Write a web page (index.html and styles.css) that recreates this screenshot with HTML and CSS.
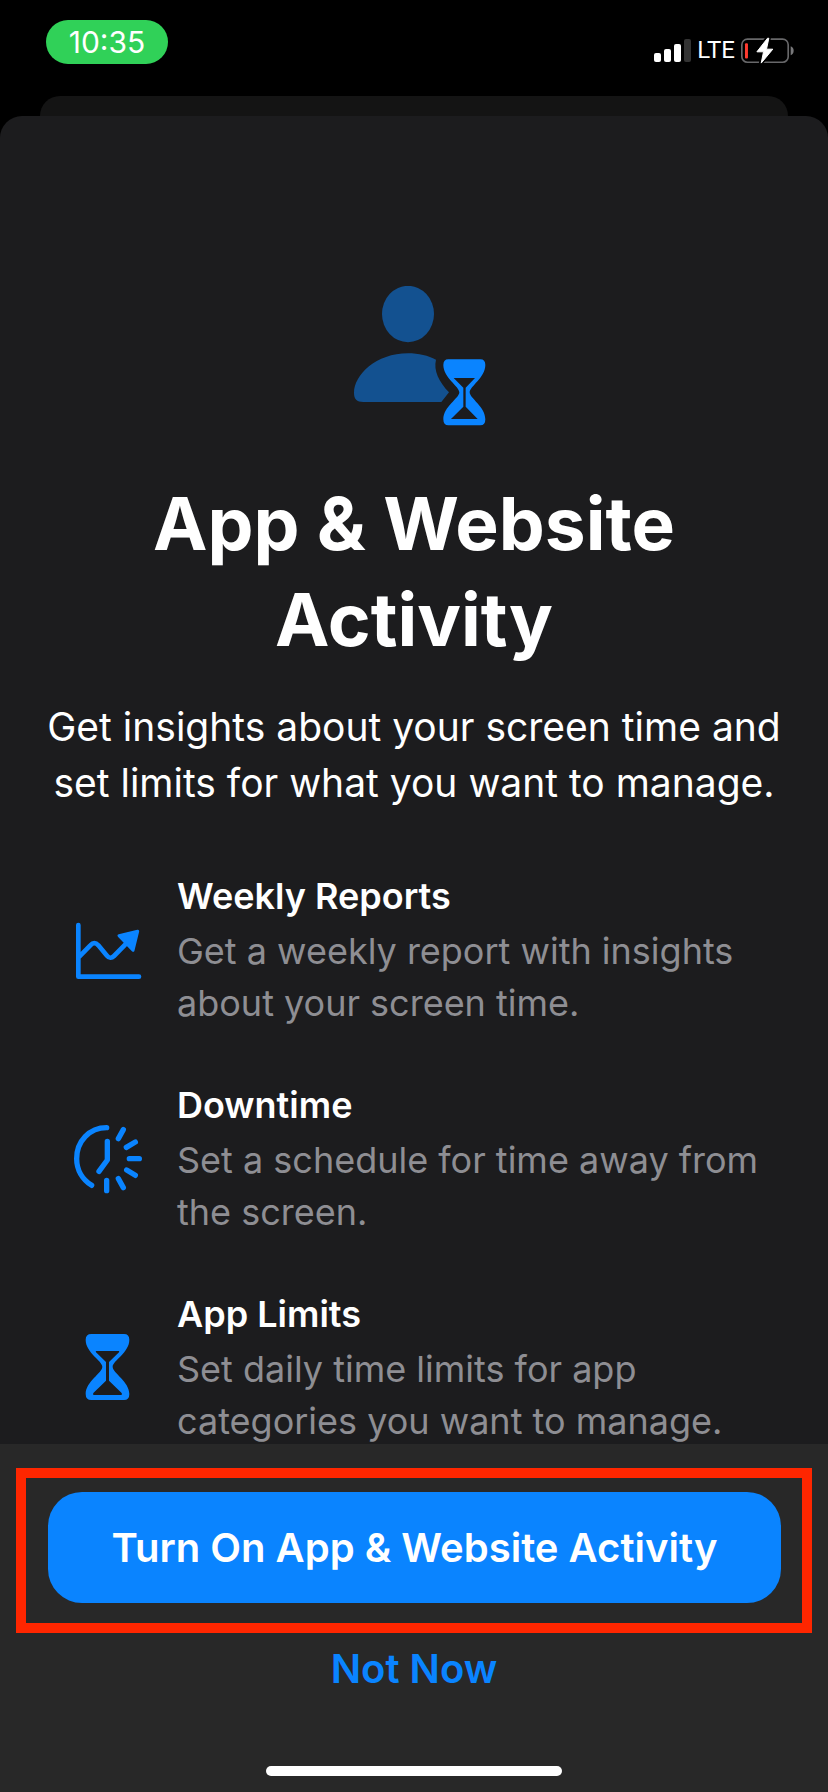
FILE: index.html
```html
<!DOCTYPE html>
<html lang="en">
<head>
<meta charset="utf-8">
<meta name="viewport" content="width=device-width, initial-scale=1">
<title>App &amp; Website Activity</title>
<link rel="stylesheet" href="styles.css">
</head>
<body>
<header class="status-bar">
  <time class="clock">10:35</time>
  <div class="indicators">
    <svg class="signal" viewBox="0 0 111 69" aria-hidden="true">
      <g fill="#fff"><rect y="42" width="21" height="27" rx="6"/><rect x="30" y="30" width="21" height="39" rx="6"/><rect x="60" y="15" width="21" height="54" rx="6"/></g>
      <rect x="90" width="21" height="69" rx="6" fill="#333"/>
    </svg>
    <span class="network">LTE</span>
    <svg class="battery" viewBox="423 108 160 80" aria-hidden="true">
      <rect x="425.500" y="113.500" width="140" height="70" rx="17" fill="none" stroke="#68686a" stroke-width="5"/>
      <path d="M573 135c12 4 12 23 0 27z" fill="#78787a"/>
      <rect x="435" y="126" width="9" height="46" rx="3" fill="#ff3b30"/>
      <path d="M503 110 471 152h18l-6 34 36-42h-17l5-34z" fill="#fff" stroke="#000" stroke-width="12" stroke-linejoin="round"/>
      <path d="M503 111 471 152h20l-7 34 35-42h-19l7-33z" fill="#fff" stroke="#fff" stroke-width="3" stroke-linejoin="round"/>
    </svg>
  </div>
</header>
<div class="back-sheet"></div>
<main class="sheet">
  <svg class="hero" viewBox="6 48 432 420" aria-hidden="true">
    <g fill="#135190">
      <ellipse cx="204" cy="132" rx="78" ry="84.500"/>
      <path d="M70 396C50 396 42 387 42 369 42 315 108 250 204 250 236 250 265 257 288 269 280 302 297 335 327 367L304 396Z"/>
    </g>
    <path fill="#0a84ff" fill-rule="evenodd" d="M325 268H421Q436 268 436 285C436 323 389 349 389 367 389 385 436 410 436 448Q436 466 421 466H325Q310 466 310 448C310 410 358 385 358 367 358 349 310 323 310 285Q310 268 325 268ZM341 324H405L377 353V410L413 447H333L370 410V353Z"/>
  </svg>
  <h1 class="title">App &amp; Website Activity</h1>
  <p class="intro">Get insights about your screen time and set limits for what you want to manage.</p>
  <ul class="features">
    <li class="feature">
      <svg class="icon" viewBox="0 0 300 300" aria-hidden="true">
        <path d="M55 72V227H237M58 167 91 133Q103 120 115 133L141 164Q151 176 162 165L205 121" fill="none" stroke="#0a84ff" stroke-width="14" stroke-linecap="round" stroke-linejoin="round"/>
        <path d="M177 104 233 91 219 148Z" fill="#0a84ff" stroke="#0a84ff" stroke-width="9" stroke-linejoin="round"/>
      </svg>
      <div class="copy">
        <h2 class="name">Weekly Reports</h2>
        <p class="detail">Get a weekly report with insights about your screen time.</p>
      </div>
    </li>
    <li class="feature">
      <svg class="icon" viewBox="0 0 300 300" aria-hidden="true">
        <path d="M140 53C88 53 50 94 50 146 50 180 68 209 95 226M142 94V150L117 184M190 59 175 86M226 96 199 112M208 146H238M200 180 226 196M175 206 190 233M140 211V242" fill="none" stroke="#0a84ff" stroke-width="16" stroke-linecap="round" stroke-linejoin="round"/>
      </svg>
      <div class="copy">
        <h2 class="name">Downtime</h2>
        <p class="detail">Set a schedule for time away from the screen.</p>
      </div>
    </li>
    <li class="feature">
      <svg class="icon" viewBox="0 0 300 300" aria-hidden="true">
        <path fill="#0a84ff" fill-rule="evenodd" d="M94 45H192Q208 45 208 62C208 101 158 125 158 143 158 162 208 187 208 225Q208 243 192 243H94Q77 243 77 225C77 187 127 162 127 143 127 125 77 101 77 62Q77 45 94 45ZM109 96Q106 96 108 100L138 129V185L100 222Q97 228 102 228H183Q188 228 185 222L147 185V129L177 100Q179 96 176 96Z"/>
      </svg>
      <div class="copy">
        <h2 class="name">App Limits</h2>
        <p class="detail">Set daily time limits for app categories you want to manage.</p>
      </div>
    </li>
  </ul>
</main>
<footer class="tray">
  <div class="highlight">
    <button class="primary" type="button">Turn On App &amp; Website Activity</button>
  </div>
  <button class="secondary" type="button">Not Now</button>
  <div class="home-bar"></div>
</footer>
</body>
</html>
```
FILE: styles.css
```css
* {
  box-sizing: border-box;
  margin: 0;
  padding: 0;
}

body {
  display: flex;
  flex-direction: column;
  min-height: 100vh;
  background: #000;
  color: #fff;
  font-family: Inter, "Liberation Sans", sans-serif;
}

.status-bar {
  display: flex;
  justify-content: space-between;
  align-items: flex-start;
  height: 96px;
  padding: 20px 34px 0 46px;
}

.clock {
  width: 122px;
  border-radius: 22px;
  background: #30d158;
  font-size: 30px;
  line-height: 44px;
  text-align: center;
}

.indicators {
  display: flex;
  align-items: center;
  gap: 6px;
  padding-top: 16px;
}

.signal {
  width: 37px;
  height: 23px;
}

.network {
  font-family: Roboto, "Noto Sans", sans-serif;
  font-size: 24px;
  line-height: 28px;
}

.battery {
  width: 53px;
  height: 27px;
}

.back-sheet {
  height: 20px;
  margin: 0 40px;
  border-radius: 20px 20px 0 0;
  background: #141414;
}

.sheet {
  display: flex;
  flex: 1;
  flex-direction: column;
  align-items: center;
  padding: 170px 32px 0;
  border-radius: 22px 22px 0 0;
  background: #1c1c1e;
}

.hero {
  width: 144px;
  height: 140px;
}

.title {
  max-width: 640px;
  margin-top: 50px;
  font-size: 73px;
  font-weight: 700;
  line-height: 96px;
  text-align: center;
}

.intro {
  margin-top: 31px;
  font-size: 39px;
  line-height: 56px;
  text-align: center;
}

/* The tray overlaps the blank space under the last line. */
.features {
  display: grid;
  gap: 47px;
  align-self: stretch;
  margin-top: 56px;
  margin-bottom: -4px;
  padding: 0 28px;
  list-style: none;
}

.feature {
  display: flex;
  align-items: center;
  gap: 17px;
}

.icon {
  flex: none;
  width: 100px;
  height: 100px;
  margin-top: 6px;
}

.name {
  font-size: 36px;
  font-weight: 600;
  line-height: 58px;
}

.detail {
  color: #8e8e93;
  font-size: 36px;
  line-height: 52px;
}

.tray {
  display: flex;
  flex-direction: column;
  align-items: center;
  padding: 24px 16px 16px;
  background: #282828;
}

.highlight {
  align-self: stretch;
  padding: 14px 21px 20px 22px;
  border: 10px solid #ff2600;
}

button {
  border: 0;
  background: none;
  color: #0a84ff;
  font: 600 40px/56px Inter, "Liberation Sans", sans-serif;
}

.primary {
  width: 100%;
  height: 111px;
  border-radius: 34px;
  background: #0a84ff;
  color: #fff;
}

.secondary {
  margin-top: 8px;
}

.home-bar {
  width: 296px;
  height: 10px;
  margin-top: 69px;
  border-radius: 5px;
  background: #fff;
}
```
